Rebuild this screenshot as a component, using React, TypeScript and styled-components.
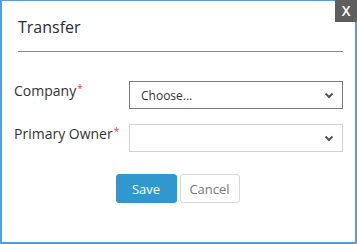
import React from "react";
import styled, { createGlobalStyle } from "styled-components";

const Global = createGlobalStyle`
  html, body { margin: 0; padding: 0; background: #ffffff; }
  body { font-family: "Open Sans", "Liberation Sans", sans-serif; }
  * { box-sizing: border-box; }
`;

const Dialog = styled.div`
  position: relative;
  width: 357px;
  height: 244px;
  background: #ffffff;
  border-style: solid;
  border-color: #5b9bd5;
  border-width: 1px 2px 2px 2px;
  display: flex;
  flex-direction: column;
`;

const CloseButton = styled.button`
  position: absolute;
  top: -1px;
  right: -2px;
  width: 22px;
  height: 22px;
  padding: 0;
  border: none;
  background: #5e5e5e;
  color: #ffffff;
  font-family: "Open Sans", "Liberation Sans", sans-serif;
  font-size: 14px;
  font-weight: 600;
  line-height: 22px;
  text-align: center;
  cursor: pointer;
`;

const Header = styled.div`
  padding: 15px 12px 0 16px;
`;

const Title = styled.h2`
  margin: 0;
  font-size: 16px;
  font-weight: 400;
  line-height: 22px;
  color: #2b2b33;
`;

const Divider = styled.hr`
  margin: 13px 0 0 0;
  border: none;
  height: 1px;
  background: #8a8a8a;
`;

const Form = styled.div`
  display: flex;
  flex-direction: column;
  gap: 15px;
  padding: 29px 12px 0 12px;
`;

const Row = styled.div`
  display: flex;
  align-items: flex-start;
`;

const Label = styled.label`
  width: 115px;
  font-size: 14px;
  line-height: 20px;
  color: #333333;
  white-space: nowrap;
`;

const Required = styled.span`
  color: #e8383d;
  font-size: 10px;
  vertical-align: top;
  line-height: 14px;
  margin-left: 1px;
`;

const Select = styled.div<{ $strong?: boolean }>`
  flex: 1;
  height: 28px;
  display: flex;
  align-items: center;
  justify-content: space-between;
  padding: 0 8px 0 11px;
  border: 1px solid ${(p) => (p.$strong ? "#7a7a7a" : "#cfcfcf")};
  background: #ffffff;
  font-size: 12px;
  color: #333333;
`;

const Actions = styled.div`
  display: flex;
  justify-content: center;
  gap: 3px;
  padding: 22px 2px 0 0;
`;

const Button = styled.button<{ $primary?: boolean }>`
  width: ${(p) => (p.$primary ? "61px" : "60px")};
  height: 29px;
  padding: 0;
  border-radius: 3px;
  border: 1px solid ${(p) => (p.$primary ? "#3197cf" : "#d6d6d6")};
  background: ${(p) => (p.$primary ? "#3197cf" : "#ffffff")};
  color: ${(p) => (p.$primary ? "#ffffff" : "#777777")};
  font-family: "Open Sans", "Liberation Sans", sans-serif;
  font-size: 13px;
  cursor: pointer;
`;

const Chevron = () => (
  <svg width="10" height="7" viewBox="0 0 10 7">
    <polyline
      points="1.5,1.5 5,5 8.5,1.5"
      fill="none"
      stroke="#555555"
      strokeWidth="2"
    />
  </svg>
);

export default function App() {
  return (
    <>
      <Global />
      <Dialog>
        <CloseButton>X</CloseButton>
        <Header>
          <Title>Transfer</Title>
          <Divider />
        </Header>
        <Form>
          <Row>
            <Label>
              Company<Required>*</Required>
            </Label>
            <Select $strong>
              <span>Choose...</span>
              <Chevron />
            </Select>
          </Row>
          <Row>
            <Label>
              Primary Owner<Required>*</Required>
            </Label>
            <Select>
              <span />
              <Chevron />
            </Select>
          </Row>
        </Form>
        <Actions>
          <Button $primary>Save</Button>
          <Button>Cancel</Button>
        </Actions>
      </Dialog>
    </>
  );
}
